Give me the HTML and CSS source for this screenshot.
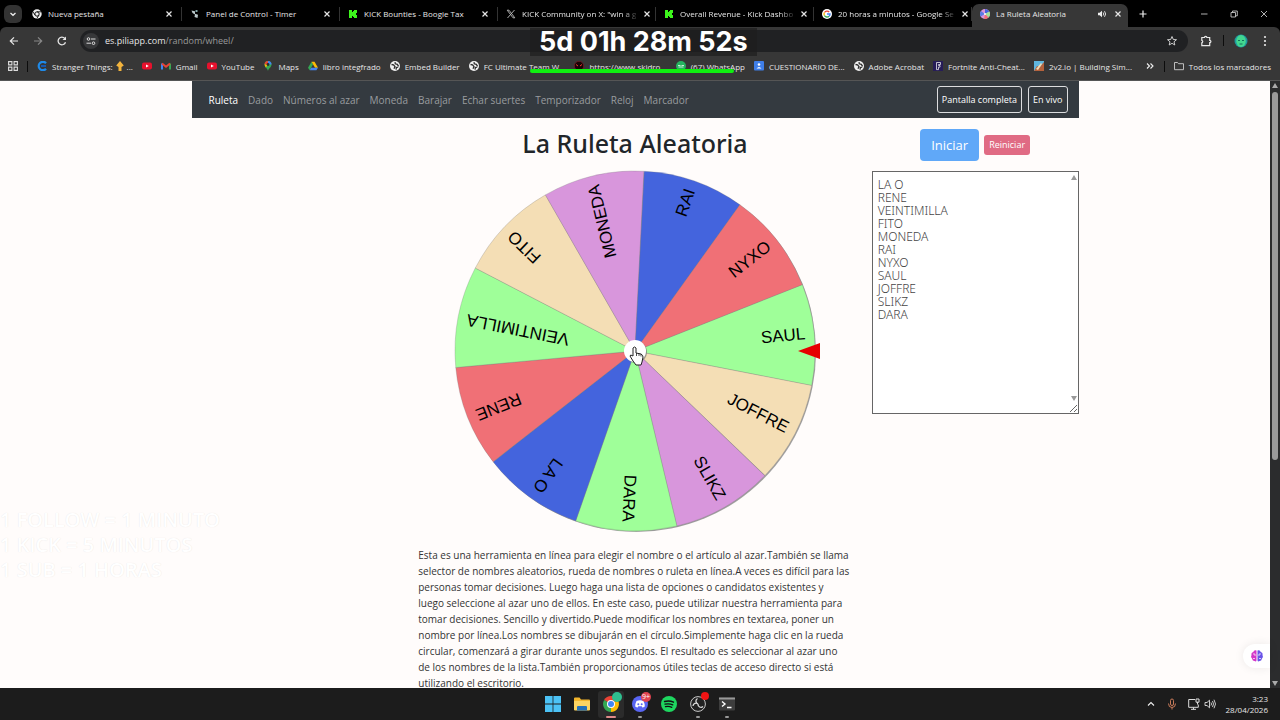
FILE: index.html
```html
<!DOCTYPE html>
<html lang="es">
<head>
    <meta charset="UTF-8">
    <meta name="viewport" content="width=device-width, initial-scale=1.0">
    <title>La Ruleta Aleatoria</title>
    <link rel="stylesheet" href="styles.css">
</head>
<body>

    <!-- Shared icons -->
    <svg class="defs" width="0" height="0">
        <symbol id="close" viewBox="0 0 10 10"><path d="M2.500 2.500l5 5M7.500 2.500l-5 5" stroke="#e6e6e6" stroke-width="1.200"/></symbol>
        <symbol id="kick" viewBox="0 0 10 10"><path d="M1 1h3v2h1V2h1V1h3v3H8v2h1v3H6V8H5V7H4v2H1z" fill="#3df51c"/></symbol>
        <symbol id="youtube" viewBox="0 0 10 10"><rect y="1.500" width="10" height="7" rx="2" fill="#e8112d"/><path d="M4 3.400v3.200L6.800 5z" fill="#fff"/></symbol>
        <symbol id="globe" viewBox="0 0 10 10"><circle cx="5" cy="5" r="5" fill="#f1f1f1"/><path d="M1.500 3.500l2 .3 1.500 1.700-1 2.200M5 1.200l.3 1.600 2 .6 1.300 2M6 8.600l.4-2 1.800-.6" fill="none" stroke="#2d2d2d" stroke-width="1.300"/></symbol>
        <symbol id="chrome" viewBox="0 0 16 16">
            <path d="M8 8L1.100 4A8 8 0 0 1 14.900 4z" fill="#ea4335"/>
            <path d="M8 8l6.900-4A8 8 0 0 1 8 16z" fill="#fbbc05"/>
            <path d="M8 8v8A8 8 0 0 1 1.100 4z" fill="#34a853"/>
            <circle cx="8" cy="8" r="4" fill="#fff"/><circle cx="8" cy="8" r="3" fill="#4285f4"/>
        </symbol>
    </svg>

    <!-- Tab strip -->
    <div class="tab-strip">
        <button class="tab-search" aria-label="Buscar pestañas"><svg width="8" height="8" viewBox="0 0 8 8"><path d="M1.500 3L4 5.300 6.500 3" fill="none" stroke="#eee" stroke-width="1.300"/></svg></button>
        <div class="tab">
            <svg class="icon" viewBox="0 0 10 10"><circle cx="5" cy="5" r="4.700" fill="#f1f1f1"/><circle cx="5" cy="5" r="2.200" fill="#f1f1f1" stroke="#111" stroke-width="1"/><path d="M5 2.800h4.500M3.100 6.100L.8 2.600M6.900 6.100L4.800 9.600" stroke="#111" stroke-width=".9"/></svg>
            <span>Nueva pestaña</span><button aria-label="Cerrar"><svg class="icon"><use href="#close"/></svg></button>
        </div>
        <div class="tab">
            <svg class="icon" viewBox="0 0 10 10"><path d="M1.500 1.500l3.500.7v2.500l3 1-.5 3.300-3-1L5 5.500 2.500 4z" fill="#b9c7c9"/><path d="M5.500 1h2v2h-2z" fill="#7fa3a5"/></svg>
            <span>Panel de Control - Timer</span><button aria-label="Cerrar"><svg class="icon"><use href="#close"/></svg></button>
        </div>
        <div class="tab">
            <svg class="icon"><use href="#kick"/></svg>
            <span>KICK Bounties - Boogie Tax</span><button aria-label="Cerrar"><svg class="icon"><use href="#close"/></svg></button>
        </div>
        <div class="tab">
            <svg class="icon" viewBox="0 0 10 10"><path d="M1.200 1.200h1.800l5.800 7.600H7zM8.500 1L1.500 9" fill="none" stroke="#bbb" stroke-width=".9"/></svg>
            <span class="faded">KICK Community on X: "win a g</span><button aria-label="Cerrar"><svg class="icon"><use href="#close"/></svg></button>
        </div>
        <div class="tab">
            <svg class="icon"><use href="#kick"/></svg>
            <span class="faded">Overall Revenue - Kick Dashbo</span><button aria-label="Cerrar"><svg class="icon"><use href="#close"/></svg></button>
        </div>
        <div class="tab">
            <svg class="icon" viewBox="0 0 10 10"><circle cx="5" cy="5" r="5" fill="#fff"/><g fill="none" stroke-width="1.400"><path d="M2.500 3.500A3 3 0 0 1 7.200 3" stroke="#ea4335"/><path d="M2.400 6.500a3 3 0 0 1 0-3" stroke="#fbbc05"/><path d="M2.400 6.500a3 3 0 0 0 4.700.7" stroke="#34a853"/><path d="M5 5h3a3 3 0 0 1-.9 2.200" stroke="#4285f4"/></g></svg>
            <span class="faded">20 horas a minutos - Google Se</span><button aria-label="Cerrar"><svg class="icon"><use href="#close"/></svg></button>
        </div>
        <div class="tab active">
            <svg class="icon" viewBox="0 0 10 10"><circle cx="5" cy="5" r="5" fill="#d896dc"/><path d="M5 5L5 0a5 5 0 0 1 4.300 2.500z" fill="#4464dd"/><path d="M5 5l4.300-2.500a5 5 0 0 1-.8 6z" fill="#9fe39a"/><path d="M5 5L.7 7.500A5 5 0 0 1 1 2z" fill="#5a7be6"/><path d="M5 5l3.500 3.500A5 5 0 0 1 4 9.900z" fill="#f07076"/><circle cx="5" cy="5" r="1" fill="#fff"/></svg>
            <span>La Ruleta Aleatoria</span>
            <svg class="icon" viewBox="0 0 10 10"><path d="M1 3.700h1.700L5 1.700v6.600L2.700 6.300H1z" fill="#eee"/><path d="M6.200 3.500q1.200 1.500 0 3M7.500 2.200q2.300 2.800 0 5.600" fill="none" stroke="#eee" stroke-width=".9"/></svg>
            <button aria-label="Cerrar"><svg class="icon"><use href="#close"/></svg></button>
        </div>
        <button class="new-tab" aria-label="Nueva pestaña"><svg class="icon" viewBox="0 0 10 10"><path d="M5 1.500v7M1.500 5h7" stroke="#eee" stroke-width="1.200"/></svg></button>
        <div class="window-buttons">
            <button aria-label="Minimizar"><svg class="icon" viewBox="0 0 10 10"><path d="M2 5h6.500" stroke="#ddd" stroke-width=".8"/></svg></button>
            <button aria-label="Restaurar"><svg class="icon" viewBox="0 0 10 10"><path d="M2 3.500h4.500V8H2zM3.500 3.300V2h4.800v4.800H6.700" fill="none" stroke="#ddd" stroke-width=".8"/></svg></button>
            <button aria-label="Cerrar ventana"><svg class="icon" viewBox="0 0 10 10"><path d="M2 2l6 6M8 2L2 8" stroke="#ddd" stroke-width=".8"/></svg></button>
        </div>
    </div>

    <!-- Address bar -->
    <div class="toolbar">
        <button aria-label="Atrás"><svg viewBox="0 0 12 12"><path d="M10 6H2.500M6 2.300L2.300 6 6 9.700" fill="none" stroke="#e8e8e8" stroke-width="1.200"/></svg></button>
        <button aria-label="Adelante"><svg viewBox="0 0 12 12"><path d="M2 6h7.500M6 2.300L9.700 6 6 9.700" fill="none" stroke="#888" stroke-width="1.200"/></svg></button>
        <button aria-label="Recargar"><svg viewBox="0 0 12 12"><path d="M9.500 7.200a3.800 3.800 0 1 1-.7-3.700" fill="none" stroke="#e8e8e8" stroke-width="1.300"/><path d="M10 1.500V5H6.500z" fill="#e8e8e8"/></svg></button>
        <div class="address">
            <button class="site-info" aria-label="Información del sitio"><svg width="10" height="10" viewBox="0 0 10 10"><g fill="none" stroke="#ddd" stroke-width="1"><circle cx="2.500" cy="3" r="1.300"/><path d="M5 3h4.500M.5 7.200H5"/><circle cx="7.500" cy="7.200" r="1.300"/></g></svg></button>
            <p class="url">es.piliapp.com<span>/random/wheel/</span></p>
            <svg viewBox="0 0 12 12"><path d="M6 1.500l1.300 3 3.200.2L8 6.800l.8 3.200L6 8.300 3.200 10 4 6.800 1.500 4.700l3.200-.2z" fill="none" stroke="#ddd" stroke-width=".9"/></svg>
        </div>
        <button aria-label="Extensiones"><svg viewBox="0 0 12 12"><path d="M1.800 2.500h2.700a1.200 1.200 0 0 1 2.400 0h2.800v2.800a1.200 1.200 0 0 1 0 2.400v3H1.800V7.800a1.300 1.300 0 0 0 0-2.500z" fill="none" stroke="#e8e8e8" stroke-width="1.200"/></svg></button>
        <i class="bar-line"></i>
        <button class="profile" aria-label="Perfil"><svg viewBox="0 0 14 14"><circle cx="7" cy="7" r="6.500" fill="#1f9aa0"/><ellipse cx="7" cy="7" rx="4.800" ry="6" fill="#42d78f"/><path d="M4 6.500h2M8 6.500h2M5.500 10h3" stroke="#14705b"/></svg></button>
        <button aria-label="Menú"><svg viewBox="0 0 12 12" fill="#e8e8e8"><circle cx="6" cy="2" r="1.100"/><circle cx="6" cy="6" r="1.100"/><circle cx="6" cy="10" r="1.100"/></svg></button>
    </div>

    <!-- Bookmarks -->
    <nav class="bookmarks">
        <a href="#" aria-label="Aplicaciones"><svg class="icon" viewBox="0 0 10 10"><path d="M.6.6h3.300v3.300H.6zM6.100.6h3.300v3.300H6.100zM.6 6.100h3.300v3.300H.6zM6.100 6.100h3.300v3.300H6.100z" fill="none" stroke="#ddd" stroke-width="1.100"/></svg></a>
        <i class="bar-line"></i>
        <a href="#"><svg class="icon" viewBox="0 0 10 10"><path d="M9 2.200A4.200 4.200 0 1 0 9 7.800" fill="none" stroke="#1f8ae8" stroke-width="2.200"/><path d="M4 5h5" stroke="#1459b3" stroke-width="2"/></svg>Stranger Things: <svg class="arrow" width="8" height="10" viewBox="0 0 8 10"><path d="M4 0l3.800 4.500L5.500 6v4h-3V6L.2 4.500z" fill="#f2b33d"/></svg>...</a>
        <a href="#" aria-label="YouTube"><svg class="icon"><use href="#youtube"/></svg></a>
        <a href="#"><svg class="icon" viewBox="0 0 10 10"><path d="M1 8.500V2.500" stroke="#4285f4" stroke-width="2"/><path d="M9 8.500V2.500" stroke="#34a853" stroke-width="2"/><path d="M1 2.500l4 3.200 4-3.200" fill="none" stroke="#ea4335" stroke-width="2"/></svg>Gmail</a>
        <a href="#"><svg class="icon"><use href="#youtube"/></svg>YouTube</a>
        <a href="#"><svg class="icon" viewBox="0 0 10 10"><path d="M5 10C4.500 7.500 1.500 6.300 1.500 3.500a3.500 3.500 0 0 1 7 0C8.500 6.300 5.500 7.500 5 10z" fill="#34a853"/><path d="M5 0a3.500 3.500 0 0 1 3.500 3.500L5 3.500z" fill="#4285f4"/><path d="M1.500 3.500A3.500 3.500 0 0 1 5 0v3.500z" fill="#ea4335"/><path d="M1.500 3.500H5L2.800 6.500z" fill="#fbbc05"/><circle cx="5" cy="3.500" r="1.400" fill="#2d2d2d"/></svg>Maps</a>
        <a href="#"><svg class="icon" viewBox="0 0 10 10"><path d="M3.500.8L0 6.800l1.700 2.500L5 3.500z" fill="#34a853"/><path d="M3.500.8h3L10 6.800H7z" fill="#fbbc05"/><path d="M1.700 9.300L3.200 6.700H10L8.400 9.300z" fill="#4285f4"/></svg>libro integfrado</a>
        <a href="#"><svg class="icon"><use href="#globe"/></svg>Embed Builder</a>
        <a href="#"><svg class="icon"><use href="#globe"/></svg>FC Ultimate Team W...</a>
        <a href="#"><svg class="icon" viewBox="0 0 10 10"><circle cx="5" cy="5" r="4.700" fill="#180507" stroke="#8b1d28" stroke-width=".6"/><path d="M2 3.500l2 1.500M8 3.500L6 5" stroke="#e33"/></svg>https://www.skidro...</a>
        <a href="#"><svg class="icon" viewBox="0 0 10 10"><circle cx="5" cy="5" r="5" fill="#25b35f"/><path d="M2 4.500h2.500M5.500 4.500H8M2.500 6h5" stroke="#dff5e7" stroke-width=".9"/></svg>(67) WhatsApp</a>
        <a href="#"><svg class="icon" viewBox="0 0 10 10"><rect width="10" height="9.500" rx="1" fill="#3f7ee8"/><circle cx="5" cy="3.500" r="1.300" fill="#fff"/><path d="M2.500 7.500q2.500-3 5 0z" fill="#fff"/></svg>CUESTIONARIO DE...</a>
        <a href="#"><svg class="icon"><use href="#globe"/></svg>Adobe Acrobat</a>
        <a href="#"><svg class="icon" viewBox="0 0 10 10"><rect width="10" height="10" fill="#261c58"/><path d="M3.500 1.500h4v2h-2v1h1.500v1.600H5.500v2.500h-2z" fill="none" stroke="#fff" stroke-width=".7"/></svg>Fortnite Anti-Cheat...</a>
        <a href="#"><svg class="icon" viewBox="0 0 10 10"><rect width="10" height="10" fill="#5fb6df"/><path d="M0 10l3-5 3 1 4-5v9z" fill="#b5623c"/><path d="M2 8l5-6 1 1-4 6z" fill="#f2dcb3"/></svg>2v2.io | Building Sim...</a>
        <a href="#" class="more" aria-label="Más marcadores"><svg class="icon" viewBox="0 0 10 10"><path d="M2 2.500L4.500 5 2 7.500M5.500 2.500L8 5 5.500 7.500" fill="none" stroke="#eee" stroke-width="1.100"/></svg></a>
        <i class="bar-line"></i>
        <a href="#"><svg class="icon" viewBox="0 0 10 10"><path d="M.5 1.500h3l1 1.200h5v6h-9z" fill="none" stroke="#ccc" stroke-width=".9"/></svg>Todos los marcadores</a>
    </nav>

    <!-- Web page -->
    <div class="viewport">
        <main class="page">
            <div class="container">
                <header class="navbar">
                    <nav>
                        <a href="#" class="current">Ruleta</a>
                        <a href="#">Dado</a>
                        <a href="#">Números al azar</a>
                        <a href="#">Moneda</a>
                        <a href="#">Barajar</a>
                        <a href="#">Echar suertes</a>
                        <a href="#">Temporizador</a>
                        <a href="#">Reloj</a>
                        <a href="#">Marcador</a>
                    </nav>
                    <button>Pantalla completa</button>
                    <button>En vivo</button>
                </header>

                <div class="row">
                    <section class="wheel-column">
                        <h1>La Ruleta Aleatoria</h1>
                        <svg class="wheel" viewBox="-185 -183 370 370">
                            <defs><path id="slice" d="M0 0L172.700-50.700A180 180 0 0 1 172.700 50.700Z"/></defs>
                            <circle class="wheel-shadow" cx="1" cy="1" r="180"/>
                            <g transform="rotate(-5.300)"><use href="#slice" class="green"/><text x="171" y="4">SAUL</text></g>
                            <g transform="rotate(27.400)"><use href="#slice" class="sand"/><text x="171" y="4">JOFFRE</text></g>
                            <g transform="rotate(60.200)"><use href="#slice" class="violet"/><text x="171" y="4">SLIKZ</text></g>
                            <g transform="rotate(92.900)"><use href="#slice" class="green"/><text x="171" y="4">DARA</text></g>
                            <g transform="rotate(125.600)"><use href="#slice" class="blue"/><text x="171" y="4">LA O</text></g>
                            <g transform="rotate(158.400)"><use href="#slice" class="red"/><text x="171" y="4">RENE</text></g>
                            <g transform="rotate(191.100)"><use href="#slice" class="green"/><text x="171" y="4">VEINTIMILLA</text></g>
                            <g transform="rotate(223.800)"><use href="#slice" class="sand"/><text x="171" y="4">FITO</text></g>
                            <g transform="rotate(256.500)"><use href="#slice" class="violet"/><text x="171" y="4">MONEDA</text></g>
                            <g transform="rotate(289.300)"><use href="#slice" class="blue"/><text x="171" y="4">RAI</text></g>
                            <g transform="rotate(322)"><use href="#slice" class="red"/><text x="171" y="4">NYXO</text></g>
                            <circle class="wheel-shadow" cx="1" cy="1" r="11"/>
                            <circle r="11" fill="#fff"/>
                            <path d="M163 0l22-8v16z" fill="#e60000"/>
                            <!-- Hand cursor -->
                            <path d="M-2 10L-5 5q0-2 3 0v-8q1.500-2 3 0v5l5 1q2 1 2 3l-1 5-1 3h-5z" fill="#fff" stroke="#222"/>
                            <path d="M1.500 2v3M4 2.500V5M6 3v2.500" stroke="#222" stroke-width=".8"/>
                        </svg>
                        <p class="description">
                            Esta es una herramienta en línea para elegir el nombre o el artículo al azar.También se llama<br>
                            selector de nombres aleatorios, rueda de nombres o ruleta en línea.A veces es difícil para las<br>
                            personas tomar decisiones. Luego haga una lista de opciones o candidatos existentes y<br>
                            luego seleccione al azar uno de ellos. En este caso, puede utilizar nuestra herramienta para<br>
                            tomar decisiones. Sencillo y divertido.Puede modificar los nombres en textarea, poner un<br>
                            nombre por línea.Los nombres se dibujarán en el círculo.Simplemente haga clic en la rueda<br>
                            circular, comenzará a girar durante unos segundos. El resultado es seleccionar al azar uno<br>
                            de los nombres de la lista.También proporcionamos útiles teclas de acceso directo si está<br>
                            utilizando el escritorio.
                        </p>
                    </section>

                    <aside class="names-column">
                        <div class="actions">
                            <button class="start">Iniciar</button>
                            <button class="reset">Reiniciar</button>
                        </div>
                        <div class="names-box">
                            <textarea aria-label="Nombres" spellcheck="false">LA O
RENE
VEINTIMILLA
FITO
MONEDA
RAI
NYXO
SAUL
JOFFRE
SLIKZ
DARA</textarea>
                            <i class="box-up"></i>
                            <i class="box-down"></i>
                        </div>
                    </aside>
                </div>
            </div>
        </main>
        <div class="scrollbar"><i class="up"></i><i class="thumb"></i><i class="down"></i></div>
        <button class="assistant" aria-label="Asistente"><svg width="14" height="14" viewBox="0 0 14 14"><path d="M6.500 1.500Q4 .5 3.300 3 1 3.500 1.500 6 .3 8 2 9.500 2.500 12 4.500 12q1.500 1 2-.5z" fill="#d436c8"/><path d="M7.500 1.500Q10 .5 10.700 3q2.300.5 1.800 3 1.200 2-.5 3.500Q11.500 12 9.500 12q-1.500 1-2-.5z" fill="#6a54e8"/><path d="M3 5h2v2M3 9.500h2M11 5H9v2M11 9.500H9" fill="none" stroke="#fff" stroke-width=".7"/></svg></button>
        <p class="watermark">1 FOLLOW = 1 MINUTO<br>1 KICK = 5 MINUTOS<br>1 SUB = 1 HORAS</p>
    </div>

    <!-- Taskbar -->
    <footer class="taskbar">
        <div class="apps">
            <button aria-label="Inicio"><svg viewBox="0 0 16 16"><path d="M0 0h7.600v7.600H0zM8.400 0H16v7.600H8.400zM0 8.400h7.600V16H0zM8.400 8.400H16V16H8.400z" fill="#4cc2f5"/></svg></button>
            <button aria-label="Explorador"><svg viewBox="0 0 16 16"><path d="M0 2.500q0-1 1-1h4.500l1.500 2h8q1 0 1 1V14H0z" fill="#f4b62c"/><path d="M0 5h16v8.500q0 1-1 1H1q-1 0-1-1z" fill="#fcd462"/><path d="M3 14.500V11q0-1 1-1h8q1 0 1 1v3.500z" fill="#2470b8"/></svg></button>
            <button aria-label="Chrome" class="open focused"><svg viewBox="0 0 16 16"><use href="#chrome"/></svg><i class="badge teal"></i></button>
            <button aria-label="Discord" class="open"><svg viewBox="0 0 16 16"><circle cx="8" cy="8" r="8" fill="#5865f2"/><path d="M4.500 5q3.500-1.500 7 0 1.500 3 1.300 5.500-1.300 1-2.500 1l-.6-1.200H6.300l-.6 1.200q-1.200 0-2.500-1Q3 8 4.500 5z" fill="#fff"/><circle cx="6.300" cy="8.200" r="1" fill="#5865f2"/><circle cx="9.700" cy="8.200" r="1" fill="#5865f2"/></svg><i class="badge count">9+</i></button>
            <button aria-label="Spotify"><svg viewBox="0 0 16 16"><circle cx="8" cy="8" r="8" fill="#1ed760"/><path d="M3.500 5.500q5-1.300 9 .7M4 8.200q4.300-1.100 7.700.7M4.500 10.700q3.500-.8 6.300.6" fill="none" stroke="#111" stroke-width="1.300" stroke-linecap="round"/></svg></button>
            <button aria-label="OBS" class="open"><svg viewBox="0 0 16 16"><circle cx="8" cy="8" r="7.400" fill="#222" stroke="#ddd" stroke-width=".9"/><path d="M7.500 2.500a3 3 0 0 0 .5 5.500M8 8a3 3 0 0 0 5 2.500M8 8a3 3 0 0 0-5 2" fill="none" stroke="#ddd" stroke-width="1.300"/></svg><i class="badge red-dot"></i></button>
            <button aria-label="Terminal" class="open"><svg viewBox="0 0 16 16"><rect y="1.500" width="16" height="13" rx="1" fill="#3d3d3d"/><path d="M0 1.500h16v2H0z" fill="#999"/><path d="M3 5.500l3 2.500-3 2.500M8 11.500h4.500" fill="none" stroke="#fff" stroke-width="1.400"/></svg></button>
        </div>
        <div class="tray">
            <svg width="10" height="10" viewBox="0 0 10 10"><path d="M2 6.500l3-3 3 3" fill="none" stroke="#eee" stroke-width="1.100"/></svg>
            <svg width="12" height="12" viewBox="0 0 12 12"><rect x="4.500" y="1" width="3" height="6.500" rx="1.500" fill="none" stroke="#c97b5a"/><path d="M2.500 5.500q0 4 3.500 4t3.500-4M6 9.500v2" fill="none" stroke="#c97b5a"/></svg>
            <div class="network">
                <svg width="12" height="12" viewBox="0 0 12 12"><path d="M7 1.500H.7v7.800h9.600V6.500M3 11.300h5M5.500 9.500v2M8 1h3v3.200H8zM9.500 4v2.500" fill="none" stroke="#ddd"/></svg>
                <svg width="12" height="12" viewBox="0 0 12 12"><path d="M1 4.500h2l2.500-2.300v7.600L3 7.500H1zM7 4.500q1 1.500 0 3M8.500 3q2 3 0 6M10 1.700q3 4.300 0 8.600" fill="none" stroke="#ddd" stroke-width=".9"/></svg>
            </div>
            <p class="clock">3:23<br>28/04/2026</p>
        </div>
    </footer>

    <!-- Countdown overlay -->
    <div class="countdown">
        <p>5d 01h 28m 52s</p>
        <div class="countdown-bar"></div>
    </div>

</body>
</html>
```
FILE: styles.css
```css
* {
    margin: 0;
    padding: 0;
    box-sizing: border-box;
}

/* General layout */
body {
    font-family: "Open Sans", "Noto Sans", sans-serif;
    font-size: 8px;
    display: flex;
    flex-direction: column;
    height: 100vh;
    overflow: hidden;
    background-color: #000;
    color: #e6e6e6;
    position: relative;
}

button {
    font-family: inherit;
    background: none;
    border: none;
    color: inherit;
    display: flex;
    align-items: center;
    justify-content: center;
}

a {
    color: inherit;
    text-decoration: none;
}

.defs {
    position: absolute;
}

.icon {
    width: 10px;
    height: 10px;
    flex: none;
}

.bar-line {
    width: 1px;
    height: 11px;
    background-color: #0c0c0c;
}

/* Tab strip */
.tab-strip {
    display: flex;
    align-items: center;
    height: 27px;
    padding-left: 4px;
}

.tab-search {
    width: 18px;
    height: 18px;
    border-radius: 6px;
    background-color: #333;
    margin-right: 2px;
}

.tab {
    display: flex;
    align-items: center;
    gap: 6px;
    flex: 0 1 158px;
    min-width: 0;
    height: 14px;
    padding: 0 7px 0 8px;
    border-right: 1px solid #333;
}

.tab span {
    flex: 1;
    white-space: nowrap;
}

.tab .faded {
    mask-image: linear-gradient(to right, #000 88%, rgba(0, 0, 0, .2));
}

.tab.active {
    align-self: flex-end;
    flex-basis: 156px;
    height: 23px;
    padding: 0 5px 4px 8px;
    border: none;
    border-radius: 7px 7px 0 0;
    background-color: #373737;
}

.new-tab {
    width: 30px;
}

.window-buttons {
    display: flex;
    margin-left: auto;
    padding-right: 1px;
}

.window-buttons button {
    width: 30px;
}

/* Address bar */
.toolbar {
    display: flex;
    align-items: center;
    height: 27px;
    padding: 0 3px 0 2px;
    background-color: #373737;
    border-radius: 6px 6px 0 0;
}

.toolbar > button {
    width: 24px;
}

.toolbar > button svg,
.address > svg {
    width: 12px;
    height: 12px;
}

.toolbar > .profile svg {
    width: 14px;
    height: 14px;
}

.toolbar .bar-line {
    margin: 0 5px;
}

.address {
    display: flex;
    align-items: center;
    flex: 1;
    gap: 6px;
    height: 22px;
    margin: 0 6px;
    padding: 0 10px 0 3px;
    border-radius: 11px;
    background-color: #202123;
}

.site-info {
    width: 16px;
    height: 16px;
    border-radius: 8px;
    background-color: #37383a;
}

.url {
    flex: 1;
    font-size: 9px;
}

.url span {
    color: #999;
}

/* Bookmarks */
.bookmarks {
    display: flex;
    align-items: center;
    gap: 9px;
    height: 27px;
    padding: 0 9px 2px 8px;
    background-color: #373737;
    border-bottom: 1px solid #555;
    white-space: nowrap;
}

.bookmarks a {
    display: flex;
    align-items: center;
    gap: 5px;
}

.bookmarks .arrow {
    margin: 0 -2px;
}

.bookmarks .more {
    margin-left: auto;
}

/* Web page */
.viewport {
    display: flex;
    flex: 1;
    min-height: 0;
    position: relative;
    background-color: #fffcfb;
    color: #333;
}

.page {
    flex: 1;
    overflow: hidden;
}

.container {
    max-width: 887px;
    margin: 0 auto;
}

.navbar {
    display: flex;
    align-items: center;
    gap: 6px;
    height: 37px;
    padding: 0 11px 0 17px;
    background-color: #343a40;
}

.navbar nav {
    display: flex;
    flex: 1;
    gap: 10px;
    font-size: 10px;
    color: #999c9f;
}

.navbar .current {
    color: #fff;
}

.navbar button {
    height: 27px;
    padding: 0 4px;
    border: 1px solid #dcdddf;
    border-radius: 3px;
    color: #fff;
    font-size: 9px;
}

.row {
    display: grid;
    grid-template-columns: 1fr 2fr 1fr;
}

.wheel-column {
    grid-column: 2;
    text-align: center;
}

h1 {
    font-family: "Noto Sans", sans-serif;
    font-size: 25px;
    font-weight: 500;
    line-height: 30px;
    padding: 10px 0;
    color: #212529;
}

.wheel {
    display: block;
    width: 370px;
    height: 370px;
    margin: 0 auto;
}

.wheel text {
    font-family: "Liberation Sans", sans-serif;
    font-size: 17px;
    text-anchor: end;
    fill: #000;
}

.wheel use {
    stroke: #777;
    stroke-width: .5;
    stroke-opacity: .5;
}

.wheel-shadow {
    fill: #777;
    opacity: .7;
}

.green { fill: #9fff99; }
.sand { fill: #f4deb5; }
.violet { fill: #d896dc; }
.blue { fill: #4464dd; }
.red { fill: #f07076; }

.description {
    margin: 9px 0 0 5px;
    font-size: 10px;
    line-height: 16px;
    text-align: left;
    white-space: nowrap;
}

/* Names list */
.names-column {
    padding-left: 15px;
}

.actions {
    display: flex;
    align-items: center;
    justify-content: center;
    gap: 5px;
    height: 53px;
}

.start {
    padding: 0 11px;
    height: 32px;
    border-radius: 4px;
    background-color: #60a8f8;
    color: #fff;
    font-size: 13px;
}

.reset {
    padding: 0 5px;
    height: 20px;
    border-radius: 3px;
    background-color: #e06b84;
    color: #fff;
    font-size: 9px;
}

.names-box {
    position: relative;
}

.names-box textarea {
    display: block;
    width: 100%;
    height: 243px;
    padding: 6px 5px;
    border: 1px solid #666;
    background-color: #fff;
    color: #444;
    font-family: "Noto Sans", sans-serif;
    font-size: 12px;
    font-weight: 300;
    line-height: 13px;
}

.box-up,
.box-down {
    position: absolute;
    right: 2px;
    border: 3px solid transparent;
}

.box-up {
    top: 1px;
    border-bottom: 5px solid #999;
}

.box-down {
    bottom: 10px;
    border-top: 5px solid #999;
}

/* Page scrollbar */
.scrollbar {
    display: flex;
    flex-direction: column;
    align-items: center;
    width: 10px;
    padding: 2px 0;
    background-color: #2b2c2d;
}

.thumb {
    width: 6px;
    height: 61%;
    margin: 4px 0 auto;
    border-radius: 3px;
    background-color: #9a9a9a;
}

.up,
.down {
    border-left: 3px solid transparent;
    border-right: 3px solid transparent;
}

.up {
    border-bottom: 5px solid #aaa;
}

.down {
    border-top: 5px solid #aaa;
}

.assistant {
    position: absolute;
    right: 10px;
    bottom: 20px;
    width: 27px;
    height: 24px;
    border-radius: 12px 0 0 12px;
    background-color: #fff;
    box-shadow: 0 0 10px rgba(0, 0, 0, .08);
}

.watermark {
    position: absolute;
    left: 0;
    bottom: 106px;
    font-size: 20px;
    font-weight: 600;
    line-height: 25px;
    color: #fff;
    text-shadow: 0 0 1px #e4e0df;
}

/* Taskbar */
.taskbar {
    display: grid;
    grid-template-columns: 1fr auto 1fr;
    align-items: center;
    height: 32px;
    padding: 0 12px;
    background-color: #1c1c1c;
}

.apps {
    display: flex;
    gap: 3px;
    grid-column: 2;
}

.apps button {
    position: relative;
    width: 26px;
    height: 27px;
    border-radius: 3px;
}

.apps svg {
    width: 16px;
    height: 16px;
}

.apps .focused {
    background-color: #2b2b2b;
}

.apps .open::after {
    content: "";
    position: absolute;
    bottom: 0;
    width: 4px;
    height: 2px;
    border-radius: 1px;
    background-color: #999;
}

.apps .focused::after {
    width: 10px;
    background-color: #e08a8a;
}

.badge {
    position: absolute;
    top: 1px;
    right: 2px;
    width: 10px;
    height: 10px;
    border-radius: 5px;
    font-style: normal;
    font-size: 7px;
    line-height: 10px;
    color: #fff;
}

.teal { background-color: #2fbf8f; }
.count { background-color: #e04350; }
.red-dot {
    width: 8px;
    height: 8px;
    background-color: #f01414;
}

.tray {
    display: flex;
    align-items: center;
    justify-content: flex-end;
    gap: 10px;
}

.network {
    display: flex;
    gap: 4px;
}

.clock {
    line-height: 11px;
    text-align: right;
}

/* Countdown overlay */
.countdown {
    position: absolute;
    top: 28px;
    left: 530px;
}

.countdown p {
    padding: 0 9px;
    background-color: rgba(30, 30, 30, .7);
    color: #fff;
    font-family: Inter, sans-serif;
    font-size: 27px;
    font-weight: 700;
    line-height: 28px;
    white-space: nowrap;
}

.countdown-bar {
    width: 90%;
    height: 4px;
    margin-top: 13px;
    border-radius: 2px;
    background-color: #10f010;
}
```
